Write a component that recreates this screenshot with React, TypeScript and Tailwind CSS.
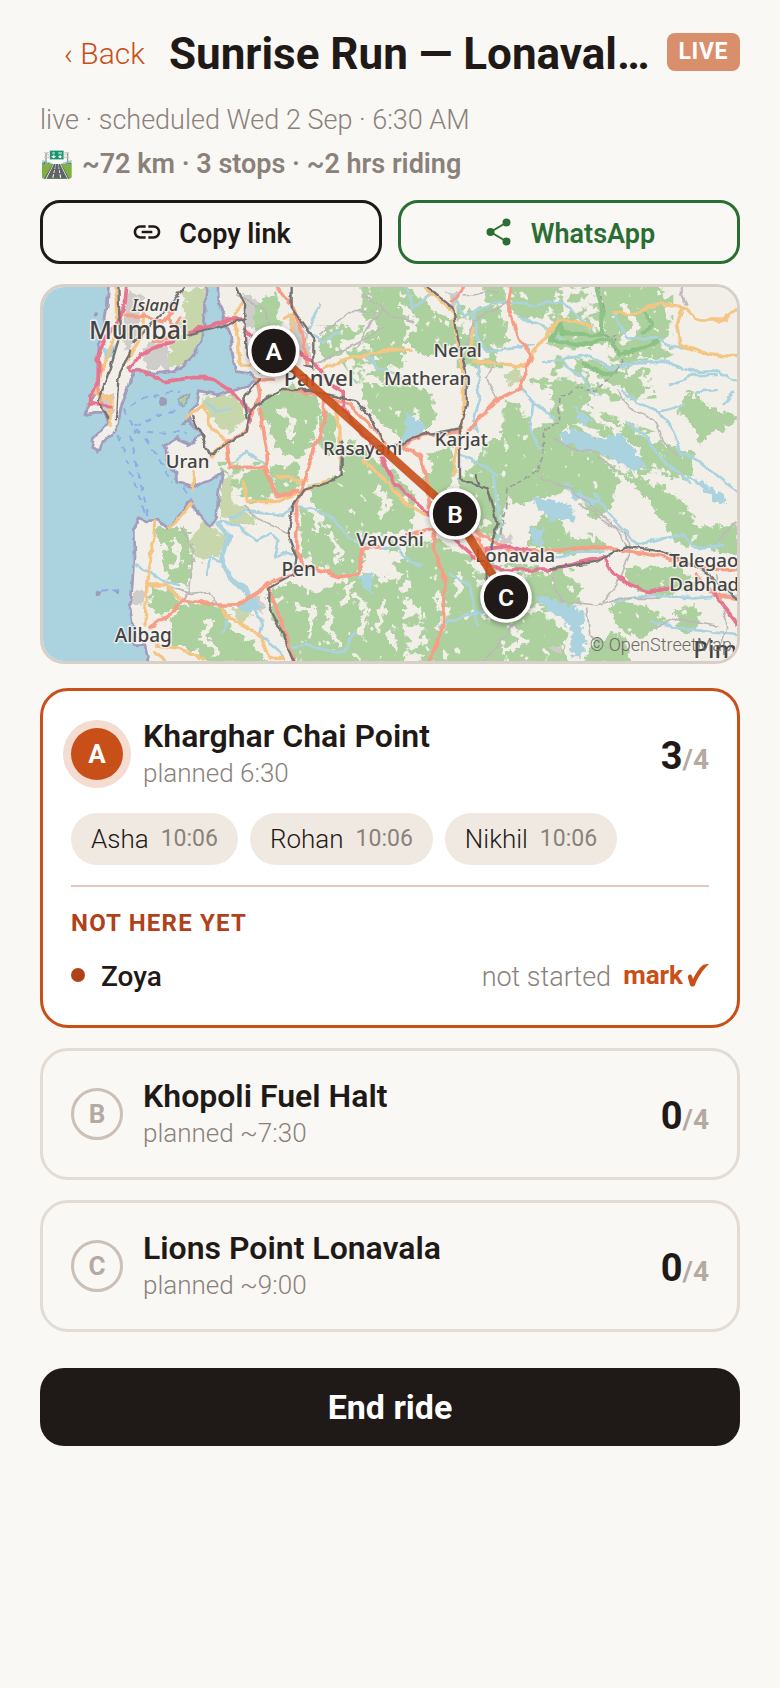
import type { ReactNode } from "react";
import { MdLink } from "react-icons/md";

type Stop = { id: string; name: string; planned: string; here: number; active?: boolean };

const riders = ["Asha", "Rohan", "Nikhil"];

const forests = [
  "M680 85L735 60L748 165L705 195L676 150Z",
  "M1000 30L1120 30L1200 110L1270 140L1275 200L1190 240L1120 190L1060 210L1040 130L1000 120Z",
  "M870 195L930 160L925 235L880 250Z",
  "M1030 200L1110 180L1115 260L1050 275Z",
  "M700 385L780 340L850 370L870 400L850 450L840 515L790 550L740 510L730 450L690 420Z",
  "M1000 340L1110 330L1190 350L1215 430L1190 450L1150 400L1130 500L1060 440L1010 385Z",
  "M880 410L912 430L918 520L890 535L870 500Z",
  "M960 500L1010 540L1090 640L1000 620L930 570Z",
  "M645 605L700 590L730 650L700 668L650 660Z",
  "M730 580L805 575L795 640L748 655Z",
  "M840 640L940 600L1060 570L1150 660L1140 760L1000 775L940 735L860 690Z",
  "M815 700L935 730L1000 800L985 900L900 885L820 840Z",
  "M385 765L470 765L482 850L470 925L420 910L398 860L412 820Z",
  "M370 945L430 955L442 990L390 1012L362 985Z",
  "M450 1000L540 985L590 1020L605 1080L660 1100L705 1160L540 1160L480 1110L432 1110L430 1040Z",
  "M720 955L790 930L860 960L990 900L1110 930L1120 1160L810 1160L770 1090L730 1020Z",
  "M1320 110L1400 95L1430 200L1350 215Z",
  "M1290 180L1350 200L1340 270L1290 250Z",
  "M1450 36L1575 36L1550 110L1480 125L1450 95Z",
  "M1360 36L1425 36L1420 80L1380 75Z",
  "M1700 60L1760 36L1880 40L1910 150L1860 240L1760 245L1730 140Z",
  "M1570 150L1620 140L1760 180L1720 208L1600 215L1555 200Z",
  "M1500 315L1600 320L1690 340L1640 440L1590 460L1570 490L1570 350Z",
  "M1670 250L1760 290L1850 340L1820 350L1720 310Z",
  "M1430 385L1470 400L1500 470L1560 450L1620 500L1700 540L1760 620L1740 690L1700 730L1620 640L1540 660L1420 690L1400 780L1340 760L1290 620L1350 560L1360 520L1420 490Z",
  "M1630 380L1740 440L1830 480L1900 560L1830 580L1740 480L1650 430Z",
  "M1950 405L1985 355L2030 400L2125 430L2080 455L2010 495L1990 440Z",
  "M1850 500L1990 540L1980 600L1900 600Z",
  "M1790 600L1880 630L1960 690L2000 760L2125 760L2125 830L1940 800L1880 700Z",
  "M1500 765L1560 715L1630 800L1700 780L1720 820L1590 830L1500 810Z",
  "M1800 885L1950 880L1995 930L1880 965L1800 920Z",
  "M1130 820L1220 800L1320 880L1360 980L1340 1100L1280 1155L1180 1160L1195 1040L1150 950Z",
  "M1480 920L1590 890L1650 940L1640 985L1560 995L1500 960Z",
  "M1350 1050L1520 1010L1600 1070L1600 1160L1300 1160L1270 1110Z",
  "M1740 985L1850 1000L1900 1040L1830 1085L1760 1040Z",
  "M1700 1100L1770 1080L1800 1160L1670 1160Z",
  "M1940 1010L1990 1000L2010 1050L1960 1075Z",
  "M1180 620L1230 560L1260 620L1230 660Z",
  "M1200 540L1260 520L1270 600L1220 600Z",
];

const clearings = [
  "M830 690L870 730L860 760", "M900 780L930 830L920 860", "M800 990L850 1010L840 1060",
  "M900 1000L890 1060L930 1110", "M980 960L1010 1010L990 1080", "M1060 980L1050 1060",
  "M540 1040L520 1090L560 1130", "M750 410L790 440L780 490", "M1220 960L1250 1010L1230 1060",
  "M1290 900L1280 960", "M1450 1060L1480 1100L1420 1130",
  "M1440 680L1460 720", "M1110 90L1160 140L1130 180", "M1780 90L1820 160L1780 200",
  "M430 800L450 850L430 880", "M1040 640L1080 690L1050 720", "M1670 400L1760 470L1830 540",
  "M960 930L940 990", "M1080 1080L1100 1120",
];

const scrub = [
  "M1430 36L1700 36L1720 180L1560 140L1500 120Z", "M1700 36L1930 36L1930 240L1860 270L1720 260Z",
  "M1580 240L1860 280L1880 370L1740 380L1560 300Z", "M1600 360L1900 480L1960 600L1760 600L1620 480Z",
  "M1080 780L1400 860L1400 1158L1060 1158Z", "M1400 860L1640 880L1600 1000L1420 1040Z",
  "M560 560L720 560L760 660L620 700Z", "M860 150L1120 150L1120 330L980 330Z", "M1280 90L1440 90L1420 280L1280 280Z",
];

const streams = [
  "M560 740L600 745L640 765L680 795L720 775L745 800L735 850L770 830L800 840",
  "M600 730L650 705L720 715L760 720L790 690L870 710L920 740L960 790L1020 810L1080 820",
  "M315 870L360 890L400 920L450 930", "M670 1000L700 1040L690 1080L730 1110L760 1150",
  "M780 1120L830 1110L870 1125L940 1130L975 1070", "M590 1040L580 1075", "M620 555L650 530L700 560",
  "M930 170L880 200L830 170L870 90", "M1005 240L1050 280L1110 300", "M1130 36L1150 100L1210 50",
  "M1270 60L1300 120L1400 80L1500 90L1600 80L1640 120L1680 160", "M1470 125L1530 150L1600 190",
  "M1330 110L1340 180L1370 230L1450 220L1510 210", "M1340 270L1350 370L1330 440L1340 470",
  "M1470 340L1510 380L1500 460L1530 520", "M1500 370L1570 430", "M1540 260L1600 250L1680 240L1740 280L1840 260",
  "M1600 270L1650 300L1690 360", "M1750 120L1790 190L1880 190L1920 210L1960 220",
  "M1820 265L1900 260L2000 290L2060 290L2120 320", "M1920 330L1990 300L2060 300",
  "M2000 350L2060 345M2080 390L2110 350", "M1780 350L1820 380L1890 410L1960 390",
  "M1890 410L1930 470L1950 530L2010 560L2060 600L2120 650",
  "M1690 650L1740 720L1790 770L1820 810L1900 790L1960 780L2000 820L2080 810",
  "M1790 440L1840 480L1900 560L1980 620", "M1390 600L1400 680L1420 750L1400 800",
  "M1230 1050L1310 1020L1360 1010", "M1260 900L1320 930L1340 1050", "M1750 980L1860 960L1990 970L2120 960",
  "M1860 1040L1950 1060L2120 1080", "M1580 850L1640 830L1720 830", "M1100 810L1140 860L1170 870",
  "M1290 540L1360 570L1400 600", "M530 900L540 850L570 860", "M530 380L560 410L600 400",
];

const minorRoads = [
  "M620 60L700 100L720 150", "M850 270L970 210L1060 160", "M870 180L960 110L1040 110",
  "M980 220L1010 160L1060 100", "M1000 60L1080 120L1150 140", "M640 690L700 740L770 775",
  "M455 760L490 830L480 940L460 980", "M400 930L480 955L540 950L560 985", "M1300 60L1400 50",
  "M1310 210L1330 140L1430 85", "M1390 270L1370 310L1400 370", "M1760 345L1800 400L1880 440L1900 500L1940 540",
  "M1570 490L1620 520L1690 530L1750 580", "M1950 40L1970 90", "M1530 610L1620 640L1690 700L1790 780L1800 830L1760 930L1720 980",
  "M1560 900L1600 980L1700 990L1770 970L1880 970", "M1670 1000L1680 1080L1740 1120", "M1880 1060L1940 1030L2060 1050",
  "M2060 800L2120 735M2060 900L2090 1060L2060 1150", "M1450 1050L1420 1090L1360 1158", "M1650 690L1760 760L1790 820",
];

const secondaryRoads = [
  "M258 36L260 140L240 230L210 290L195 350L240 370L240 450",
  "M640 80L610 120L625 200L630 270L660 270", "M760 130L790 120L780 180",
  "M880 280L960 250L1080 225L1140 222", "M470 430L520 390L540 450L590 500L540 545",
  "M375 740L370 800L352 900L345 1050", "M355 930L410 930L445 970", "M570 990L600 1030L690 1080L720 1150L760 1150",
  "M380 1110L450 1120L520 1155M375 1130L400 1158", "M490 675L455 725L420 755", "M640 620L650 680L740 680L800 655L900 615",
  "M490 590L490 640", "M910 380L930 460L930 550", "M1000 560L1060 610L1130 690L1190 720",
  "M1180 36L1270 110L1280 200L1300 300L1300 420L1280 520L1270 600",
  "M1330 258L1400 265L1490 275L1510 230L1560 170L1580 135L1640 140L1680 155",
  "M1750 115L1820 115L1890 85L1960 95L2000 135L2085 135L2125 95",
  "M1960 95L1940 150L1950 210L2040 240L2125 245", "M1330 160L1320 240", "M350 80L330 190L290 260",
  "M740 600L830 620",
];

const primaryRoads = [
  "M740 36L790 100L820 180L832 270", "M285 120L350 125L400 140L440 90", "M410 130L440 160",
  "M680 310L690 360L660 430L650 470L590 500L600 570", "M690 400L710 520L715 600L740 665L800 650",
  "M770 345L870 360L960 390L1040 470L1080 530", "M885 370L880 450L840 560L800 690L800 830L820 870L930 905L985 900L1000 820L1050 815",
  "M600 580L700 580L710 600", "M360 1060L430 1010L455 975L560 990L620 990L690 950L710 925L790 900",
  "M1445 36L1435 90L1460 180L1500 240L1490 290L1470 340L1400 375L1330 450L1310 480",
  "M1110 515L1170 540L1185 600L1200 700L1215 760L1210 820L1245 920L1240 1050L1200 1158",
  "M1110 515L1180 480L1290 470", "M1210 760L1130 780", "M1340 770L1440 830L1600 825L1680 815L1770 825L1900 845L2010 880L2125 885",
  "M710 930L740 1000L770 1090L795 1158", "M2000 900L2050 960L2125 970", "M370 200L420 190L450 130M220 390L200 330L210 270",
  "M1250 770L1350 790L1370 850", "M1300 36L1270 80", "M690 312L730 312",
];

const motorways = [
  "M290 36L285 80L270 130L225 190L205 240L205 320L180 360L178 385L240 395",
  "M300 280L330 240L380 215L430 200", "M305 290L340 290L400 320L490 308L545 308L600 345L640 390L660 410L660 440",
  "M480 170L540 150L600 132L645 132M645 160L680 200L810 230L870 280L890 320L940 350L940 400L990 470L1040 520L1090 620L1190 710L1260 780L1350 860L1410 885L1550 885L1640 865L1720 845",
  "M1720 845L1745 890L1800 930L1850 950L1930 935M2050 955L2125 1050", "M1370 860L1370 820L1440 815L1500 830",
];

const railways = [
  "M265 36L270 180L240 280L205 380L235 430M300 230L265 310L258 430", "M620 36L645 90L650 240L690 290",
  "M785 36L785 100L850 190L850 280L820 270", "M470 180L540 160L650 130", "M460 40L420 90L360 150L310 200",
  "M545 540L600 500L650 470L660 410L690 380L750 345L840 345L900 360L980 380L1020 420L1060 500",
  "M690 310L640 370L650 430", "M540 540L490 430", "M1190 36L1270 100L1285 200L1310 300L1310 390L1290 460L1290 560L1290 610L1370 640L1390 700L1400 750L1380 820",
  "M1100 510L1180 480L1290 460", "M935 500L935 600L890 625L820 645L790 690L775 780L800 850L790 900L715 940L715 990L750 1060L795 1158",
  "M1560 880L1700 860L1780 815L1900 830L2010 880L2120 970", "M1370 850L1370 920", "M1340 600L1350 625",
];

const places: [string, number, number, number, boolean?][] = [
  ["Island", 376, 107, 50, true], ["Mumbai", 325, 192, 75], ["Panvel", 866, 333, 66], ["Uran", 473, 578, 56],
  ["Rasayani", 998, 540, 56], ["Neral", 1283, 247, 56], ["Matheran", 1193, 330, 56], ["Karjat", 1294, 512, 56],
  ["Vavoshi", 1080, 812, 55], ["Pen", 806, 904, 57], ["Alibag", 340, 1100, 57], ["Lonavala", 1456, 862, 56],
];

const pins: [string, number, number][] = [["A", 731, 228], ["B", 1275, 717], ["C", 1428, 966]];

function Strokes({ lines, className, width, dash }: { lines: string[]; className: string; width: number; dash?: string }) {
  return (
    <g className={className} fill="none" strokeWidth={width} strokeDasharray={dash} strokeLinejoin="round" strokeLinecap={dash ? "butt" : "round"}>
      {lines.map((d) => <path key={d} d={d} />)}
    </g>
  );
}

function RouteMap() {
  return (
    <svg viewBox="39 36 2082 1122" preserveAspectRatio="xMidYMid slice" className="block h-full w-full" role="img" aria-label="Route map">
      <defs>
        <filter id="rough" x="-5%" y="-5%" width="110%" height="110%">
          <feTurbulence type="fractalNoise" baseFrequency="0.045" numOctaves="3" seed="7" result="n" />
          <feDisplacementMap in="SourceGraphic" in2="n" scale="38" xChannelSelector="R" yChannelSelector="G" />
        </filter>
        <filter id="wobble" x="-5%" y="-5%" width="110%" height="110%">
          <feTurbulence type="fractalNoise" baseFrequency="0.03" numOctaves="2" seed="3" result="n" />
          <feDisplacementMap in="SourceGraphic" in2="n" scale="18" xChannelSelector="R" yChannelSelector="G" />
        </filter>
        <filter id="patches" x="-5%" y="-5%" width="110%" height="110%">
          <feTurbulence type="fractalNoise" baseFrequency="0.03 0.036" numOctaves="3" seed="12" />
          <feColorMatrix values="0 0 0 0 0  0 0 0 0 0  0 0 0 0 0  14 0 0 0 -6.8" result="mask" />
          <feComposite in="SourceGraphic" in2="mask" operator="in" />
        </filter>
        <filter id="holes" x="-5%" y="-5%" width="110%" height="110%">
          <feTurbulence type="fractalNoise" baseFrequency="0.034 0.026" numOctaves="3" seed="31" />
          <feColorMatrix values="0 0 0 0 0  0 0 0 0 0  0 0 0 0 0  0 16 0 0 -11.2" result="mask" />
          <feComposite in="SourceGraphic" in2="mask" operator="in" />
        </filter>
        <filter id="lift" x="-40%" y="-40%" width="180%" height="180%" colorInterpolationFilters="sRGB">
          <feDropShadow dx="0" dy="6" stdDeviation="9" floodColor="#000000" floodOpacity="0.35" />
        </filter>
      </defs>
      <rect x="0" y="0" width="2200" height="1200" className="fill-[#f2efe9]" />
      <g filter="url(#patches)" className="fill-[#add19e]">{scrub.map((d) => <path key={d} d={d} />)}</g>
      <g filter="url(#rough)">
        <g className="fill-[#add19e] stroke-[#add19e]" strokeWidth="12">{forests.map((d) => <path key={d} d={d} />)}</g>
        <g className="fill-[#c8d7ab]">
          <path d="M455 60L500 36L528 36L522 160L512 210L470 255L430 288L400 262L435 200L465 120Z" />
          <path d="M510 370L600 358L635 375L642 430L602 478L552 440L530 400Z" />
          <path d="M570 610L600 600L612 690L695 735L650 755L570 725Z" />
          <path d="M520 735L595 790L572 840L512 862L478 810Z" />
          <path d="M600 1010L650 990L670 1020L630 1045Z" />
          <path d="M1425 295L1470 280L1480 320L1440 335Z" />
        </g>
        <g className="fill-[#cfcdca]">
          <path d="M340 210L410 200L415 280L350 285Z" /><path d="M640 60L680 70L670 160L640 150Z" />
          <path d="M770 110L820 150L850 270L800 220Z" /><path d="M310 950L345 945L340 990L305 985Z" />
          <path d="M670 960L710 965L700 1010L665 1000Z" /><path d="M210 355L250 360L245 420L215 410Z" />
          <path d="M290 50L340 60L320 200L280 230Z" /><path d="M1410 780L1440 775L1445 810L1410 815Z" />
          <path d="M1270 120L1290 60L1250 50Z" /><path d="M1560 1120L1600 1110L1590 1140Z" />
        </g>
        <Strokes lines={clearings} className="stroke-[#f2efe9]" width={18} />
      </g>
      <rect x="690" y="36" width="1440" height="1130" className="fill-[#f2efe9]" filter="url(#holes)" />
      <g filter="url(#rough)">
        <g className="fill-[#aad3df]">
          <path d="M1130 400L1155 430L1190 450L1170 485L1120 495Z" />
          <path d="M1500 665L1560 680L1630 690L1630 740L1550 730Z" />
          <path d="M1490 760L1545 765L1530 815L1505 800Z" />
          <path d="M1580 490L1620 465L1700 490L1780 480L1850 580L1800 590L1740 540L1680 530Z" />
          <path d="M1625 390L1660 415L1690 440L1660 450Z" />
          <path d="M1600 610L1640 650L1710 680L1690 695L1630 670Z" />
          <path d="M1510 965L1580 975L1660 1010L1665 1140L1625 1150L1620 1050L1560 1010Z" />
          <path d="M980 910L1030 900L1030 960L1000 940Z" />
          <path d="M620 985L670 970L700 1000L640 1010Z" />
          <path d="M1960 600L2020 620L2100 680L2080 690Z" />
        </g>
      </g>
      <g filter="url(#wobble)">
        <path
          d="M0 0L238 0L232 90L222 150L208 200L204 260L206 330L182 385L160 420L192 412L222 412L236 440L215 470L190 490L185 520L202 530L216 505L246 475L266 445L272 400L290 350L300 310L320 285L380 295L430 290L480 255L515 205L522 160L526 100L530 0L562 0L566 80L582 130L602 180L606 230L616 290L660 295L684 310L650 335L600 350L560 362L508 350L500 385L474 425L490 450L515 480L480 508L440 490L405 512L415 570L438 590L440 622L490 636L540 616L578 590L566 650L560 725L540 757L508 722L480 675L450 722L415 758L385 735L350 738L325 728L310 760L312 850L305 960L300 1000L310 1060L315 1112L345 1112L362 1200L0 1200Z"
          className="fill-[#aad3df] stroke-[#a39dbd]" strokeWidth="8" strokeLinejoin="round"
        />
        <path d="M215 215L240 225L262 200L250 245L222 250Z" className="fill-[#aad3df]" />
        <g className="fill-[#9f9bbb]">
          <circle cx="197" cy="118" r="7" /><circle cx="396" cy="378" r="12" /><circle cx="205" cy="955" r="8" /><circle cx="265" cy="952" r="6" />
          <path d="M450 452L490 408L480 440Z" />
        </g>
        <path d="M445 370L475 355L472 385L458 392Z" className="fill-[#add19e] stroke-[#a39dbd]" strokeWidth="5" />
        <path d="M560 742L600 785L575 850L600 910L650 945L668 985" fill="none" className="stroke-[#aad3df]" strokeWidth="15" strokeLinejoin="round" />
        <Strokes lines={streams} className="stroke-[#aad3df]" width={8} />
        <Strokes lines={minorRoads} className="stroke-[#bcb8b8]" width={5} />
        <Strokes
          lines={["M1710 36L1720 90L1715 180L1760 180L1750 220L1780 260L1700 350L1640 340L1590 365L1585 440L1540 470L1540 540L1520 590", "M1520 590L1430 640L1430 700L1410 780"]}
          className="stroke-[#9b9b9b]" width={5} dash="16 9"
        />
        <Strokes lines={["M1700 36L1718 110L1715 180L1600 175L1590 145L1560 195L1640 210L1740 190L1770 240L1830 220L1880 200", "M1840 110L1870 150L1840 170", "M1660 265L1720 300L1760 290"]} className="stroke-[#8cc285]" width={12} />
        <Strokes lines={secondaryRoads} className="stroke-[#f5c583]" width={10} />
        <Strokes lines={primaryRoads} className="stroke-[#f79e86]" width={11} />
        <Strokes lines={motorways} className="stroke-[#e7748f]" width={11} />
        <Strokes lines={railways} className="stroke-[#777372]" width={7} />
        <Strokes
          lines={["M300 390L360 365L450 350", "M285 400L310 470L470 475", "M310 455L430 405L460 380", "M262 480L290 560L305 600L350 730", "M300 480L320 560L330 620L355 720", "M345 490L400 570L430 620M460 635L490 680", "M215 950L270 945"]}
          className="stroke-[#8faae6]" width={6} dash="20 18"
        />
      </g>
      <g textAnchor="middle" paintOrder="stroke" strokeWidth="9" strokeLinejoin="round" className="fill-[#444444] stroke-[#f7f5f1]/80 font-['Noto_Sans',sans-serif] font-medium">
        {places.map(([name, x, y, size, italic]) => (
          <text key={name} x={x} y={y} fontSize={size} fontStyle={italic ? "italic" : "normal"}>{name}</text>
        ))}
        <g textAnchor="start">
          <text x="1918" y="875" fontSize="56">Talegaon</text>
          <text x="1918" y="948" fontSize="56">Dabhade</text>
          <text x="1990" y="1150" fontSize="72">Pimpri</text>
        </g>
      </g>
      <text x="2106" y="1128" textAnchor="end" fontSize="54" className="fill-[#6d6863] font-['Roboto',sans-serif] font-light">© OpenStreetMap</text>
      <path d="M731 228L1275 717L1428 966" fill="none" className="stroke-[#c84f18]" strokeOpacity="0.9" strokeWidth="25" strokeLinejoin="round" />
      {pins.map(([id, x, y]) => (
        <g key={id}>
          <circle cx={x} cy={y} r="72" strokeWidth="11" className="fill-[#1f1a17] stroke-white" filter="url(#lift)" />
          <text x={x} y={y + 28} textAnchor="middle" fontSize="74" className="fill-white font-['Roboto',sans-serif] font-semibold">{id}</text>
        </g>
      ))}
    </svg>
  );
}

function ShareIcon() {
  return (
    <svg viewBox="0 0 32 32" className="size-8" fill="currentColor" stroke="currentColor" aria-hidden="true">
      <path d="M23.5 6.5L7.5 16L23.5 25.5" fill="none" strokeWidth="2" />
      <circle cx="23.5" cy="6.5" r="4" stroke="none" />
      <circle cx="7.5" cy="16" r="4" stroke="none" />
      <circle cx="23.5" cy="25.5" r="4" stroke="none" />
    </svg>
  );
}

function StopCard({ stop, children }: { stop: Stop; children?: ReactNode }) {
  return (
    <section className={stop.active ? "rounded-[28px] border-3 border-[#c84f18] bg-white p-7" : "rounded-[28px] border-3 border-[#e3dcd5] p-7"}>
      <div className="flex h-[70px] items-center gap-5">
        <span
          className={
            stop.active
              ? "flex size-13 shrink-0 items-center justify-center rounded-full bg-[#c84f18] text-[26px] font-bold text-white ring-8 ring-[#f5dcd1]"
              : "flex size-13 shrink-0 items-center justify-center rounded-full border-3 border-[#cbc0b7] text-[26px] font-bold text-[#b5aaa2]"
          }
        >
          {stop.id}
        </span>
        <div className="min-w-0 flex-1">
          <h2 className="truncate text-[32px] leading-[38px] font-semibold">{stop.name}</h2>
          <p className="text-[26px] leading-9 font-light text-[#8a817a]">planned {stop.planned}</p>
        </div>
        <p className="pt-2 text-[38px] leading-12 font-bold">
          {stop.here}
          <span className="text-[28px] text-[#b5aaa2]">/4</span>
        </p>
      </div>
      {children}
    </section>
  );
}

export default function App() {
  return (
    <main className="min-h-screen bg-[#faf8f5] px-10 pt-6 pb-10 font-['Roboto',sans-serif] text-[#1f1a17]">
      <header className="flex items-center gap-4">
        <button type="button" className="ml-6 shrink-0 text-[30px] leading-10 font-light text-[#c84f18]">‹ Back</button>
        <h1 className="min-w-0 flex-1 truncate pl-2 text-[44px] leading-[60px] font-bold">Sunrise Run — Lonavala Loop</h1>
        <span className="mb-1 shrink-0 rounded-lg bg-[#d98e6c] px-3 text-[23px] leading-[38px] font-bold tracking-wide text-white">LIVE</span>
      </header>
      <p className="mt-4 text-[27px] leading-10 font-light text-[#8a817a]">live · scheduled Wed 2 Sep · 6:30 AM</p>
      <p className="mt-1 flex items-center gap-2 text-[27px] leading-10 font-semibold text-[#8a817a]">
        <span aria-hidden="true">🛣️</span>
        <span>~72 km · 3 stops · ~2 hrs riding</span>
      </p>
      <div className="mt-4 grid grid-cols-2 gap-4">
        <button type="button" className="flex h-16 items-center justify-center gap-4 rounded-[20px] border-3 border-[#1f1a17] text-[27px] font-semibold">
          <MdLink className="size-8" aria-hidden="true" />
          <span className="pt-1">Copy link</span>
        </button>
        <button type="button" className="flex h-16 items-center justify-center gap-4 rounded-[20px] border-3 border-[#2b6e34] text-[27px] font-semibold text-[#2b6e34]">
          <ShareIcon />
          <span className="pt-1">WhatsApp</span>
        </button>
      </div>
      <div className="mt-5 h-95 overflow-hidden rounded-3xl border-3 border-[#d8cfc8]">
        <RouteMap />
      </div>
      <div className="mt-6 flex flex-col gap-5">
        <StopCard stop={{ id: "A", name: "Kharghar Chai Point", planned: "6:30", here: 3, active: true }}>
          <ul className="mt-6 flex flex-wrap gap-3">
            {riders.map((name) => (
              <li key={name} className="flex h-13 items-center gap-3 rounded-full bg-[#f0e9e2] px-5 text-[26px] font-light">
                {name}
                <time className="text-[23px] font-normal text-[#8a817a]">10:06</time>
              </li>
            ))}
          </ul>
          <div className="mt-5 border-t-2 border-[#dfcac1] pt-5">
            <h3 className="text-[24px] leading-8 font-bold tracking-wider text-[#b0421a]">NOT HERE YET</h3>
            <div className="mt-[14px] flex h-11 items-center">
              <span className="size-3.5 rounded-full bg-[#b0421a]" />
              <span className="ml-4 flex-1 pt-1 text-[28px] font-medium">Zoya</span>
              <span className="pt-1 text-[27px] font-light text-[#8a817a]">not started</span>
              <button type="button" className="ml-3 flex items-center gap-1 text-[26px] leading-8 font-bold text-[#c84f18]">
                mark
                <svg viewBox="0 0 22 24" className="h-6 w-[22px]" fill="currentColor" aria-hidden="true">
                  <path d="M22 1C15 8 11 14 8 22C7 24 4 24 3 22L1 15C0 12 4 10 5 13L6 16C9 10 12 5 16 2C18 1 20 1 22 1Z" />
                </svg>
              </button>
            </div>
          </div>
        </StopCard>
        <StopCard stop={{ id: "B", name: "Khopoli Fuel Halt", planned: "~7:30", here: 0 }} />
        <StopCard stop={{ id: "C", name: "Lions Point Lonavala", planned: "~9:00", here: 0 }} />
      </div>
      <button type="button" className="mt-9 h-[78px] w-full rounded-3xl bg-[#1f1a17] text-[34px] font-bold text-white">End ride</button>
    </main>
  );
}
